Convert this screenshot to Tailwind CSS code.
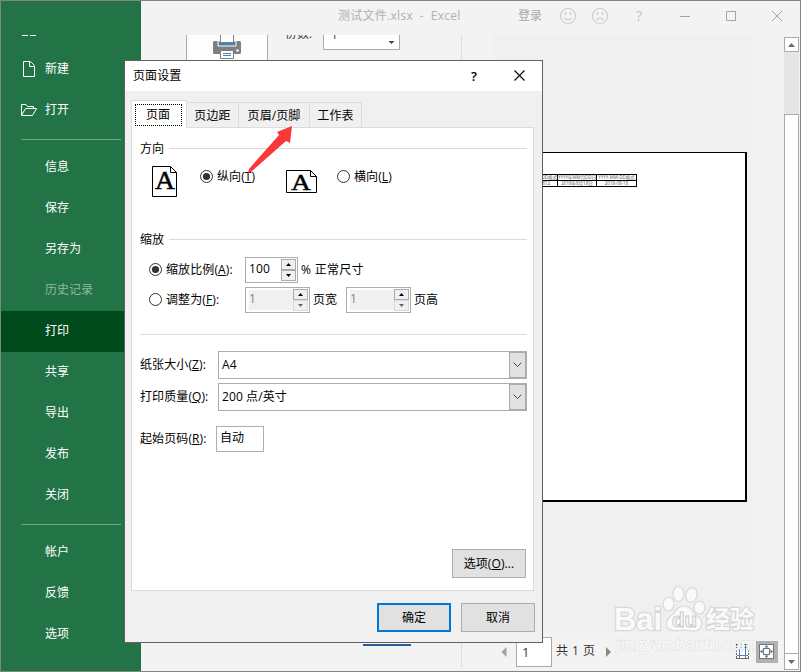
<!DOCTYPE html>
<html lang="zh-CN">
<head>
<meta charset="utf-8">
<title>Excel</title>
<script src="https://cdn.jsdelivr.net/npm/@tailwindcss/browser@4"></script>
</head>
<body class="bg-[#f3f3f3]">
<div class="relative flex h-[672px] w-[801px] overflow-hidden bg-[#f3f3f3] font-['Open_Sans','Noto_Sans_CJK_SC',sans-serif] text-[12px] leading-[16px] text-black whitespace-nowrap">

  <!-- backstage navigation -->
  <nav class="flex h-full w-[141px] shrink-0 flex-col bg-[#227447] pt-[35px] text-white">
    <div class="flex h-[13px] gap-[2px] pl-[22px]"><i class="h-px w-[6px] bg-white"></i><i class="h-px w-[6px] bg-white"></i></div>
    <div class="flex h-[41px] items-center pl-[22px]">
      <svg width="14" height="18" viewBox="0 0 14 18" fill="none" stroke="#fff"><path d="M1.500 1.500H8.500L12.500 5.500V16.500H1.500ZM7.500 1.500V6.500H12.500"/></svg>
      <span class="ml-[9px]">新建</span>
    </div>
    <div class="flex h-[41px] items-center pl-[20px]">
      <svg width="18" height="14" viewBox="0 0 18 14" fill="none" stroke="#fff"><path d="M1.500 12V1.500H6L7.500 3.500H13.500V5.500M1.500 12.500L5.500 5.500H16.500L12.500 12.500Z"/></svg>
      <span class="ml-[7px]">打开</span>
    </div>
    <div class="mt-[9px] ml-[21px] h-px w-[100px] shrink-0 bg-[#71ab86]"></div>
    <div class="mt-[7px] flex h-[41px] items-center pb-[2px] pl-[45px]">信息</div>
    <div class="flex h-[41px] items-center pb-[2px] pl-[45px]">保存</div>
    <div class="flex h-[41px] items-center pb-[2px] pl-[45px]">另存为</div>
    <div class="flex h-[41px] items-center pb-[2px] pl-[45px] text-[#8fb9a0]">历史记录</div>
    <div class="flex h-[41px] items-center bg-[#004b1c] pb-[2px] pl-[45px]">打印</div>
    <div class="flex h-[41px] items-center pb-[2px] pl-[45px]">共享</div>
    <div class="flex h-[41px] items-center pb-[2px] pl-[45px]">导出</div>
    <div class="flex h-[41px] items-center pb-[2px] pl-[45px]">发布</div>
    <div class="flex h-[41px] items-center pb-[2px] pl-[45px]">关闭</div>
    <div class="mt-[8px] ml-[21px] h-px w-[100px] shrink-0 bg-[#71ab86]"></div>
    <div class="mt-[7px] flex h-[41px] items-center pb-[2px] pl-[45px]">帐户</div>
    <div class="flex h-[41px] items-center pb-[2px] pl-[45px]">反馈</div>
    <div class="flex h-[41px] items-center pb-[2px] pl-[45px]">选项</div>
  </nav>

  <div class="flex h-full w-[660px] flex-col">
    <!-- title bar -->
    <header class="flex h-[35px] shrink-0 items-center pb-[3px] text-[#b1b1b1]">
      <span class="ml-[197px] w-[180px] tracking-[0.280px]">测试文件.xlsx&nbsp; -&nbsp; Excel</span>
      <span class="w-[41px] text-[#a9a9a9]">登录</span>
      <svg class="shrink-0" width="18" height="18" viewBox="0 0 18 18" fill="none" stroke="#cfcfcf" stroke-width="1.200"><circle cx="9" cy="9" r="7.500"/><path d="M6.500 5V8M11.500 5V8" stroke-width="1.500"/><path d="M5.500 11Q9 14.500 12.500 11"/></svg>
      <svg class="ml-[14px] shrink-0" width="18" height="18" viewBox="0 0 18 18" fill="none" stroke="#cfcfcf" stroke-width="1.200"><circle cx="9" cy="9" r="7.500"/><path d="M6.500 5V8M11.500 5V8" stroke-width="1.500"/><path d="M5.500 13Q9 9 12.500 13"/></svg>
      <span class="ml-[27px] w-[44px] text-[14px] text-[#c4c4c4]">?</span>
      <svg class="shrink-0" width="103" height="12" viewBox="0 0 103 12" fill="none" stroke="#a5a5a5"><path d="M0 6.500H10M46.500 1.500H55.500V10.500H46.500ZM92 1L102 11M102 1L92 11"/></svg>
    </header>

    <div class="flex h-[637px]">
      <!-- print settings -->
      <section class="flex h-[632px] w-[321px] flex-col justify-between border-r border-[#dfdfdf]">
        <div class="flex items-start overflow-hidden">
          <div class="ml-[45px] flex h-[60px] w-[82px] justify-center border-x border-[#ababab] bg-[#fdfdfd]">
            <svg width="28" height="25" viewBox="0 0 28 25"><rect y="6" width="28" height="13" rx="1.500" fill="#7f7f7f"/><path d="M5 6H23V11H5Z" fill="#4a7ebb" stroke="#fff"/><path d="M7.500 0V7.500H20.500V0" fill="#fff" stroke="#7f7f7f"/><circle cx="24.500" cy="15.500" r="1.300" fill="#fff"/><path d="M7.500 15.500H20.500V23.500H7.500Z" fill="#fff" stroke="#7f7f7f"/><path d="M10 18.500H18M10 20.500H18" stroke="#4a7ebb"/></svg>
          </div>
          <div class="ml-[17px] h-[9px] w-[38px] overflow-hidden text-[#444]"><span class="-mt-[9px] block">份数:</span></div>
          <div class="flex h-[15px] w-[77px] justify-between overflow-hidden border border-t-0 border-[#ababab] bg-white pr-[4px] pl-[7px] text-[#444]">
            <span class="-mt-[8px]">1</span>
            <svg class="mt-[5px]" width="7" height="5" viewBox="0 0 7 5"><path d="M.5 1H6.500L3.500 4Z" fill="#444"/></svg>
          </div>
        </div>
        <div class="mb-[21px] ml-[222px] h-[17px] w-[48px] border-b-2 border-[#2a6099] leading-[17px] text-[#2a6099]">页面设置</div>
      </section>

      <!-- print preview -->
      <main class="flex w-[322px] flex-col">
        <div class="ml-[31px] h-[597px] w-[259px] bg-[#f0f0f0] pt-[117px]">
          <div class="h-[350px] w-[254px] border-t border-r-2 border-b-2 border-black bg-white pt-[21px]">
            <div class="grid w-[144px] grid-cols-[64px_39px_40px] border-t border-l border-black text-center text-[4.500px] leading-[5px] text-[#555]">
              <span class="h-[5px] overflow-hidden border-r border-b border-black box-content w-[63px] text-right">YYYYMMDD格式</span>
              <span class="h-[5px] overflow-hidden border-r border-b border-black box-content w-[38px]">YYYY年MM月DD日</span>
              <span class="h-[5px] overflow-hidden border-r border-b border-black box-content w-[39px]">YYYY-MM-DD格式</span>
              <span class="h-[5px] overflow-hidden border-r border-b border-black box-border h-[6px] w-[64px] pr-[7px] text-right">20180812</span>
              <span class="h-[5px] overflow-hidden border-r border-b border-black box-border h-[6px] w-[39px]">2018年8月18日</span>
              <span class="h-[5px] overflow-hidden border-r border-b border-black box-border h-[6px] w-[40px]">2018-08-18</span>
            </div>
          </div>
        </div>
        <div class="flex h-[39px] items-center text-[#333]">
          <svg class="ml-[39px]" width="6" height="10" viewBox="0 0 6 10"><path d="M5.500 0V10L.5 5Z" fill="#a0a0a0"/></svg>
          <div class="ml-[9px] flex h-[30px] w-[36px] items-center border border-[#ababab] bg-white pl-[5px] text-[13px]">1</div>
          <span class="ml-[4px] w-[50px] -mt-[2px] tracking-[0.500px]">共 1 页</span>
          <svg width="6" height="10" viewBox="0 0 6 10"><path d="M0 0V10L5 5Z" fill="#888"/></svg>
          <svg class="ml-[124px] shrink-0" width="14" height="16" viewBox="0 0 14 16" fill="none"><rect x=".5" y=".5" width="12" height="14" fill="#fff" stroke="#666"/><path d="M3.500 1V14M9.500 1V14M1 3.500H12M1 11.500H12" stroke="#4f81bd"/><path d="M.5 2V14M12.500 2V14" stroke="#fff" stroke-dasharray="1 2"/></svg>
          <div class="ml-[6px] flex h-[22px] w-[22px] shrink-0 items-center justify-center bg-[#b1b1b1]">
            <svg width="16" height="16" viewBox="0 0 16 16"><rect x=".5" y=".5" width="14" height="14" fill="#fff" stroke="#777"/><rect x="4.500" y="4.500" width="6" height="6" fill="#fff" stroke="#777"/><path d="M5.500 3.500L7.500 1L9.500 3.500ZM5.500 11.500L7.500 14L9.500 11.500ZM3.500 5.500L1 7.500L3.500 9.500ZM11.500 5.500L14 7.500L11.500 9.500Z" fill="#3d6fb0"/></svg>
          </div>
        </div>
      </main>

      <!-- vertical scroll bar -->
      <div class="mt-[2px] flex h-[633px] w-[15px] flex-col bg-[#e6e6e6]">
        <div class="flex h-[15px] items-center justify-center border border-[#ababab] bg-white"><svg width="7" height="4" viewBox="0 0 7 4"><path d="M0 4L3.500 0L7 4Z" fill="#6a6a6a"/></svg></div>
        <div class="mt-[62px] h-[540px] border border-[#ababab] bg-white"></div>
        <div class="flex h-[16px] items-center justify-center border border-t-0 border-[#ababab] bg-white"><svg width="7" height="4" viewBox="0 0 7 4"><path d="M0 0L3.500 4L7 0Z" fill="#6a6a6a"/></svg></div>
      </div>
    </div>
  </div>

  <!-- Baidu Jingyan watermark -->
  <svg class="absolute top-[584px] left-[612px]" width="146" height="74" viewBox="0 0 146 74" fill="#fafafa" stroke="#d8d8d8" stroke-width="1.200" font-weight="bold">
    <g paint-order="stroke" stroke-width="2.500">
      <text x="2" y="46" font-family="Liberation Sans" font-size="32" textLength="48" lengthAdjust="spacingAndGlyphs">Bai</text>
      <text x="94" y="44" font-family="Noto Sans CJK SC" font-size="24" textLength="48" lengthAdjust="spacingAndGlyphs">经验</text>
    </g>
    <ellipse cx="56.500" cy="20" rx="5.500" ry="7"/><ellipse cx="66.500" cy="10" rx="5.500" ry="7.500"/><ellipse cx="79.500" cy="11" rx="5.500" ry="7.500" transform="rotate(12 79.500 11)"/><ellipse cx="87.500" cy="23.500" rx="5.500" ry="6.500"/>
    <path d="M72 22C65 22 64 27 60 31C55 35 53 38 55 43C58 48 64 47 72 46C80 47 86 49 89 43C91 38 89 34 84 31C80 27 79 22 72 22Z"/>
    <text x="60" y="43" font-family="Liberation Sans" font-size="21" fill="#fafafa" stroke="#c9c9c9" stroke-width="1" textLength="25" lengthAdjust="spacingAndGlyphs">du</text>
    <text x="5" y="66" font-family="Open Sans" font-size="16" font-weight="normal" fill="#fbfbfb" stroke="#e4e4e4" stroke-width="1.500" paint-order="stroke" textLength="139" lengthAdjust="spacingAndGlyphs">jingyan.baidu.com</text>
  </svg>

  <!-- page setup dialog -->
  <div class="absolute top-[60px] left-[124px] flex h-[583px] w-[419px] flex-col border border-[#626262] bg-[#f0f0f0] tracking-[0.100px]">
    <div class="flex h-[30px] shrink-0 items-center bg-white pl-[8px]">
      <span class="w-[337px]">页面设置</span>
      <span class="-mt-px ml-px w-[43px] text-[13px] font-semibold">?</span>
      <svg class="-mt-[2px]" width="11" height="11" viewBox="0 0 11 11" stroke="#000" stroke-width="1.100"><path d="M.5.5L10.500 10.500M10.500.5L.5 10.500"/></svg>
    </div>

    <div class="z-10 mt-[9px] -mb-px ml-[6px] flex h-[28px] shrink-0 items-end">
      <div class="h-[28px] w-[56px] border border-b-0 border-[#dcdcdc] bg-white pt-[3px] pl-[3px]"><div class="flex h-[22px] w-[47px] items-center justify-center border border-dotted border-black pr-px">页面</div></div>
      <div class="flex h-[26px] w-[52px] items-center justify-center border border-l-0 border-[#dcdcdc] pt-[2px]">页边距</div>
      <div class="flex h-[26px] w-[71px] items-center justify-center border border-l-0 border-[#dcdcdc] pt-[2px]">页眉/页脚</div>
      <div class="flex h-[26px] w-[52px] items-center justify-center border border-l-0 border-[#dcdcdc] pt-[2px]">工作表</div>
    </div>

    <div class="ml-[6px] flex h-[464px] w-[403px] shrink-0 flex-col border border-[#dcdcdc] bg-white pl-[8px]">
      <div class="flex h-[38px] items-center pt-[3px]"><span>方向</span><i class="ml-[5px] h-px w-[358px] bg-[#dcdcdc]"></i></div>
      <div class="mb-[32px] flex h-[31px] items-start">
        <svg class="ml-[12px]" width="26" height="31" viewBox="0 0 26 31"><path d="M.5.500H18.500L24.500 6.500V30.500H.5ZM18.500.500V6.500H24.500" fill="#fff" stroke="#000"/><text x="3" y="23" font-family="Liberation Serif" font-size="25" stroke="#000" stroke-width=".5" textLength="20" lengthAdjust="spacingAndGlyphs">A</text></svg>
        <svg class="mt-[4px] ml-[22px]" width="13" height="13" viewBox="0 0 13 13"><circle cx="6.500" cy="6.500" r="6" fill="#fff" stroke="#333"/><circle cx="6.500" cy="6.500" r="3.600" fill="#333"/></svg>
        <span class="mt-[3px] ml-[4px] w-[69px]">纵向(<u>T</u>)</span>
        <svg class="mt-[4px]" width="31" height="23" viewBox="0 0 31 23"><path d="M.5.500H24.500L30.500 6.500V22.500H.5ZM24.500.500V6.500H30.500" fill="#fff" stroke="#000"/><text x="5" y="19.500" font-family="Liberation Serif" font-size="24" stroke="#000" stroke-width=".5" textLength="20" lengthAdjust="spacingAndGlyphs">A</text></svg>
        <svg class="mt-[4px] ml-[20px]" width="13" height="13" viewBox="0 0 13 13"><circle cx="6.500" cy="6.500" r="6" fill="#fff" stroke="#333"/></svg>
        <span class="mt-[3px] ml-[4px]">横向(<u>L</u>)</span>
      </div>
      <div class="flex h-[20px] items-center"><span class="pt-[2px]">缩放</span><i class="ml-[5px] h-px w-[358px] bg-[#dcdcdc]"></i></div>
      <div class="mt-[8px] flex h-[26px] items-center">
        <svg class="-mt-[2px] ml-[9px]" width="13" height="13" viewBox="0 0 13 13"><circle cx="6.500" cy="6.500" r="6" fill="#fff" stroke="#333"/><circle cx="6.500" cy="6.500" r="3.600" fill="#333"/></svg>
        <span class="ml-[4px] w-[79px]">缩放比例(<u>A</u>):</span>
        <div class="flex h-[26px] w-[53px] items-center justify-between border border-[#abadb3] bg-white pr-px pl-[3px]">
          <span class="-mt-[2px]">100</span>
          <div class="flex h-[22px] w-[15px] flex-col">
            <i class="flex h-[11px] items-center justify-center border border-[#ababab] bg-[#f0f0f0]"><svg width="5" height="3" viewBox="0 0 5 3"><path d="M0 3L2.500 0L5 3Z"/></svg></i>
            <i class="flex h-[11px] items-center justify-center border border-[#ababab] bg-[#f0f0f0]"><svg width="5" height="3" viewBox="0 0 5 3"><path d="M0 0L2.500 3L5 0Z"/></svg></i>
          </div>
        </div>
        <span class="ml-[3px] tracking-[0.300px]">% 正常尺寸</span>
      </div>
      <div class="mt-[4px] flex h-[26px] items-center">
        <svg class="-mt-[2px] ml-[9px]" width="13" height="13" viewBox="0 0 13 13"><circle cx="6.500" cy="6.500" r="6" fill="#fff" stroke="#333"/></svg>
        <span class="ml-[4px] w-[79px]">调整为(<u>F</u>):</span>
        <div class="flex h-[26px] w-[65px] items-center border border-[#abadb3] bg-white pr-px pl-[3px]">
          <span class="flex h-[20px] w-[44px] items-center bg-[#f0f0f0] pb-[3px] text-[#838383]">1</span>
          <div class="flex h-[22px] w-[15px] flex-col">
            <i class="flex h-[11px] items-center justify-center border border-[#ababab] bg-[#f0f0f0]"><svg width="5" height="3" viewBox="0 0 5 3"><path d="M0 3L2.500 0L5 3Z"/></svg></i>
            <i class="flex h-[11px] items-center justify-center border border-[#d9d9d9] bg-[#f0f0f0]"><svg width="5" height="3" viewBox="0 0 5 3"><path d="M0 0L2.500 3L5 0Z" fill="#666"/></svg></i>
          </div>
        </div>
        <span class="ml-[3px] w-[33px]">页宽</span>
        <div class="flex h-[26px] w-[65px] items-center border border-[#abadb3] bg-white pr-px pl-[3px]">
          <span class="flex h-[20px] w-[44px] items-center bg-[#f0f0f0] pb-[3px] text-[#838383]">1</span>
          <div class="flex h-[22px] w-[15px] flex-col">
            <i class="flex h-[11px] items-center justify-center border border-[#ababab] bg-[#f0f0f0]"><svg width="5" height="3" viewBox="0 0 5 3"><path d="M0 3L2.500 0L5 3Z"/></svg></i>
            <i class="flex h-[11px] items-center justify-center border border-[#d9d9d9] bg-[#f0f0f0]"><svg width="5" height="3" viewBox="0 0 5 3"><path d="M0 0L2.500 3L5 0Z" fill="#666"/></svg></i>
          </div>
        </div>
        <span class="ml-[3px]">页高</span>
      </div>
      <div class="mt-[21px] h-px w-[387px] shrink-0 bg-[#dcdcdc]"></div>
      <div class="mt-[16px] flex h-[28px] items-center">
        <span class="w-[78px]">纸张大小(<u>Z</u>):</span>
        <div class="flex h-[28px] w-[309px] items-center justify-between border border-[#abadb3] bg-white pl-[3px]"><span>A4</span>
          <i class="flex h-[26px] w-[17px] items-center justify-center border border-[#ababab] bg-[#e1e1e1]"><svg width="9" height="6" viewBox="0 0 9 6" fill="none" stroke="#444"><path d="M.5.500L4.500 4.500L8.500.5"/></svg></i></div>
      </div>
      <div class="mt-[4px] flex h-[28px] items-center">
        <span class="w-[78px]">打印质量(<u>Q</u>):</span>
        <div class="flex h-[28px] w-[309px] items-center justify-between border border-[#abadb3] bg-white pl-[3px]"><span>200 点/英寸</span>
          <i class="flex h-[26px] w-[17px] items-center justify-center border border-[#ababab] bg-[#e1e1e1]"><svg width="9" height="6" viewBox="0 0 9 6" fill="none" stroke="#444"><path d="M.5.500L4.500 4.500L8.500.5"/></svg></i></div>
      </div>
      <div class="mt-[15px] flex h-[26px] items-center">
        <span class="w-[76px]">起始页码(<u>R</u>):</span>
        <div class="flex h-[26px] w-[48px] items-center border border-[#abadb3] bg-white pb-[2px] pl-[3px]">自动</div>
      </div>
      <div class="mt-[97px] ml-[312px] flex h-[29px] w-[74px] shrink-0 items-center justify-center border border-[#adadad] bg-[#e1e1e1]">选项(<u>O</u>)...</div>
    </div>

    <div class="mt-[12px] flex h-[29px] shrink-0 gap-[10px] pl-[252px]">
      <div class="flex w-[74px] items-center justify-center border-2 border-[#0078d7] bg-[#e1e1e1]">确定</div>
      <div class="flex w-[74px] items-center justify-center border border-[#adadad] bg-[#e1e1e1]">取消</div>
    </div>
  </div>

  <!-- red pointer arrow -->
  <svg class="absolute top-[120px] left-[240px] z-20" width="60" height="60" viewBox="0 0 60 60"><path d="M52 6L50 23L46 21L11 52L8 53L9 49L39 15L37 12Z" fill="#fb3838"/></svg>

  <div class="pointer-events-none absolute inset-0 z-30 border border-[#848484]"></div>
</div>
</body>
</html>
